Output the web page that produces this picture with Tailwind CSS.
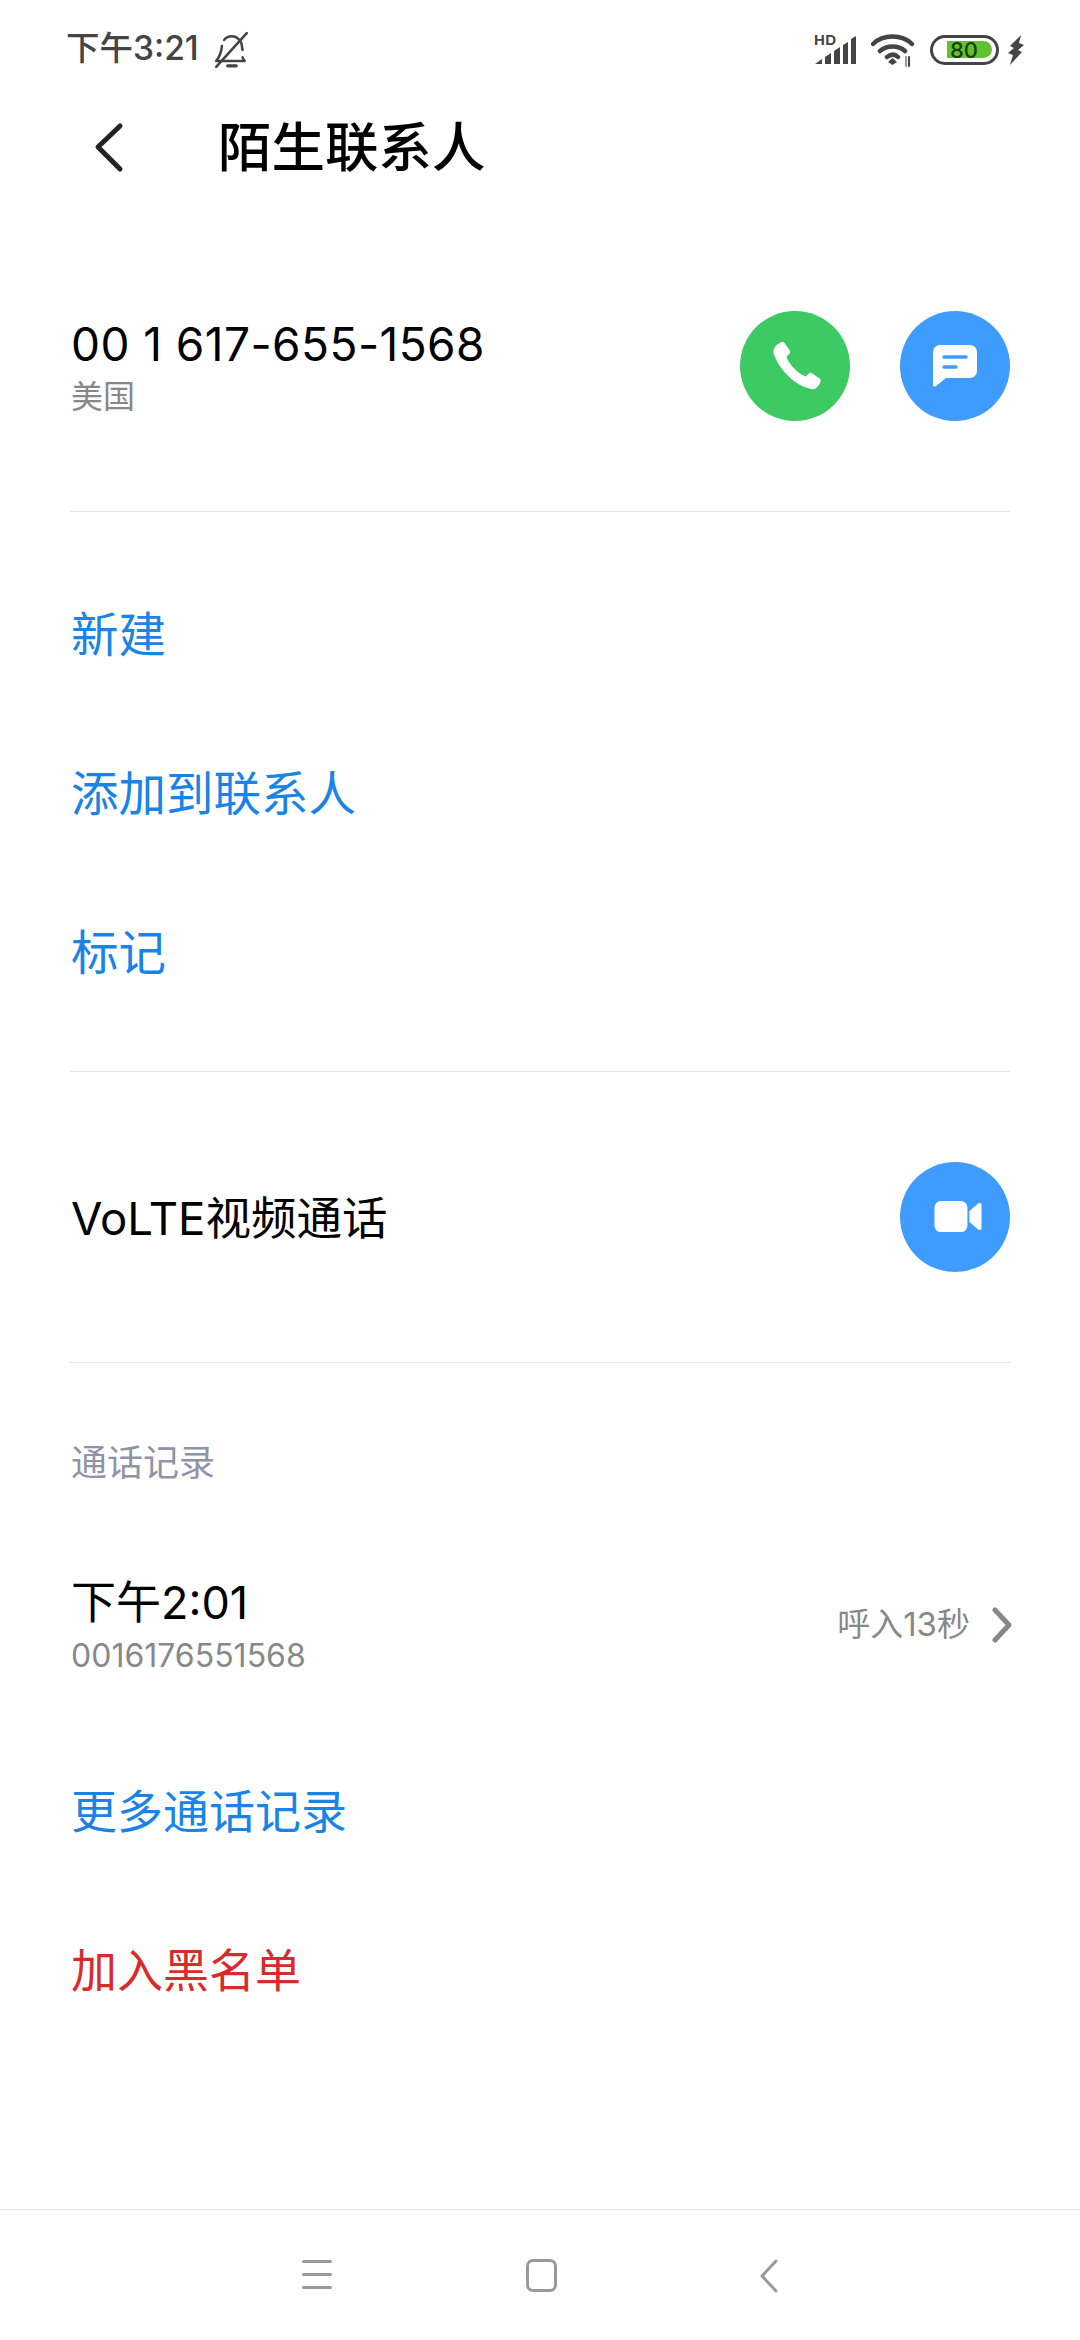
<!doctype html>
<html lang="zh-CN">
<head>
<meta charset="utf-8">
<script src="https://cdn.jsdelivr.net/npm/@tailwindcss/browser@4"></script>
</head>
<body class="m-0 bg-white">
<div class="w-[1080px] h-[2340px] flex flex-col bg-white font-['Inter','Noto_Sans_CJK_SC',sans-serif] overflow-hidden">
  <!-- status bar -->
  <div class="h-[100px] shrink-0 flex items-center pl-[66px] pr-[56px] text-[#444]">
    <span class="text-[33.5px] leading-none font-medium mb-[2px]">下午3:21</span>
    <svg class="ml-[14px]" width="38" height="38" viewBox="0 0 36 36" fill="none" stroke="#444" stroke-width="2.4" stroke-linecap="round" stroke-linejoin="round">
      <path d="M28 18c-.5-2-.5-4-1-6-1-4-5-7-9-7-3 0-5.500 1-7.500 3.500M8.500 14c-.5 5-2 10-5.500 14.500h27c-.8-1-1.500-2-2-3.500"/>
      <path d="M3 34 32 2"/>
      <path d="M14 33h8" stroke-width="3"/>
    </svg>
    <div class="ml-auto flex items-center">
      <div class="relative w-[42px] h-[32px]">
        <span class="absolute left-0 top-0 text-[15px] leading-[12px] font-bold font-['Liberation_Sans',sans-serif] tracking-[0.5px] text-[#444]">HD</span>
        <svg width="42" height="32" viewBox="0 0 42 32" fill="#444">
          <path d="M1 30 8 25v5zM11 23l6-4v11h-6zM20 17l6-4v17h-6zM29 11l5-3v22h-5zM37 5l5-3v28h-5z"/>
        </svg>
      </div>
      <svg class="ml-[15px]" width="46" height="34" viewBox="0 0 46 34" fill="none" stroke="#444" stroke-width="4.500" stroke-linecap="round">
        <path d="M2 11C12 1 31 1 41 11M9 18c7-6 18-6 25 0M16 24c4-3 8-3 11 0"/>
        <path d="M21.500 25 17 29l4.500 3 4.500-3z" fill="#444" stroke="none"/>
        <path d="M35 24v9" stroke="#999" stroke-width="2"/>
        <path d="M38 24v9" stroke-width="2"/>
      </svg>
      <div class="ml-[13px] relative w-[69px] h-[30px] rounded-full border-[3.5px] border-[#444] bg-white">
        <div class="absolute left-[14px] top-[3px] w-[45px] h-[17px] rounded-r-full bg-[#5fc32f]"></div>
        <span class="absolute left-[17px] top-0 h-[23px] flex items-center text-[22px] leading-none font-medium text-[#1d3a10]">80</span>
      </div>
      <svg class="ml-[9px]" width="16" height="30" viewBox="0 0 16 30" fill="#444"><path d="M13 0 2 11l4 2-6 5 5 2-3 10L14 17l-4-2 6-5-5-2z"/></svg>
    </div>
  </div>

  <!-- header -->
  <div class="h-[96px] shrink-0 flex items-center pl-[92px]">
    <svg width="34" height="52" viewBox="0 0 34 52" fill="none" stroke="#222" stroke-width="5" stroke-linecap="round" stroke-linejoin="round"><path d="M28 4 6 25l22 22"/></svg>
    <span class="ml-[92px] text-[53.5px] leading-none font-medium text-black">陌生联系人</span>
  </div>

  <div class="px-[70px] flex flex-col flex-1">
    <!-- contact -->
    <div class="h-[315px] shrink-0 pt-[25px] flex items-center justify-between">
      <div class="flex flex-col pl-px">
        <span class="text-[46px] tracking-[0.45px] leading-[56px] text-black">00 1 617-655-1568</span>
        <span class="mt-[5px] text-[32px] leading-[40px] text-[#888]">美国</span>
      </div>
      <div class="flex items-center gap-[50px]">
        <div class="w-[110px] h-[110px] rounded-full bg-[#3dc963] flex items-center justify-center">
          <svg class="ml-[4px]" width="50" height="50" viewBox="0 0 52 52" fill="#fff"><path d="M9 1.500c1.500-1 3-.8 4 .5l5.500 8c.8 1.200.6 2.500-.5 3.500L15 16c2.500 8 11 17 20 21l3-3c1-1 2.300-1.200 3.500-.4l8 5.500c1.300 1 1.500 2.400.6 4-1.500 3-3.500 6-6.500 7-2 .5-4-.2-6-1C21 44 7 28 2 14c-.6-2-.8-4 0-6 1.300-3 4-5 7-6.500z"/></svg>
        </div>
        <div class="w-[110px] h-[110px] rounded-full bg-[#3f9cff] flex items-center justify-center">
          <svg width="44" height="42" viewBox="0 0 44 42"><path d="M7 0h30a7 7 0 0 1 7 7v19a7 7 0 0 1-7 7H13L3 41c-1.500 1.200-3 .4-3-1V7a7 7 0 0 1 7-7z" fill="#fff"/><path d="M11 12h22M11 22h12" stroke="#3f9cff" stroke-width="3.500" stroke-linecap="round"/></svg>
        </div>
      </div>
    </div>
    <div class="h-px bg-[#e6e6e6] shrink-0"></div>

    <!-- actions -->
    <div class="pt-[43px] pb-[38px] shrink-0 flex flex-col text-[47.5px] text-[#1a84e6] pl-px">
      <div class="h-[159px] flex items-center">新建</div>
      <div class="h-[159px] flex items-center">添加到联系人</div>
      <div class="h-[160px] flex items-center">标记</div>
    </div>
    <div class="h-px bg-[#e6e6e6] shrink-0"></div>

    <!-- video -->
    <div class="h-[290px] shrink-0 flex items-center justify-between">
      <span class="text-[45.5px] text-black pl-px pt-[5px]">VoLTE视频通话</span>
      <div class="w-[110px] h-[110px] rounded-full bg-[#3f9cff] flex items-center justify-center">
        <svg class="ml-[5px]" width="50" height="32" viewBox="0 0 50 34" fill="#fff"><rect x="0" y="0" width="35" height="33" rx="7"/><path d="M37 11 46 3c2-1.500 4-1 4 1v25c0 2-2 2.500-4 1l-9-8z"/></svg>
      </div>
    </div>
    <div class="h-px bg-[#e6e6e6] shrink-0"></div>

    <!-- log -->
    <div class="h-[200px] shrink-0 pl-px text-[36px] text-[#8f93a8] flex items-center">通话记录</div>
    <div class="h-[126px] mt-[-1px] shrink-0 flex items-center justify-between pl-px">
      <div class="flex flex-col">
        <span class="text-[45px] leading-[56px] text-black">下午2:01</span>
        <span class="mt-[5px] text-[32px] leading-[40px] text-[#888]">0016176551568</span>
      </div>
      <div class="flex items-center mr-[-4px]">
        <span class="text-[33px] text-[#888]">呼入13秒</span>
        <svg class="ml-[20px]" width="24" height="36" viewBox="0 0 24 36" fill="none" stroke="#888" stroke-width="5" stroke-linecap="round" stroke-linejoin="round"><path d="M5 3 19 18 5 33"/></svg>
      </div>
    </div>
    <div class="h-[159px] mt-[44px] shrink-0 flex items-center text-[46px] text-[#1a84e6] pl-px">更多通话记录</div>
    <div class="h-[159px] shrink-0 flex items-center text-[46px] text-[#d92b2b] pl-px">加入黑名单</div>
  </div>

  <!-- nav bar -->
  <div class="h-[131px] shrink-0 border-t border-[#e6e6e6] relative flex items-start pt-[49px] pl-[302px] text-[#999]">
    <div class="w-[30px] flex flex-col gap-[10px] mt-[1px]">
      <div class="h-[3px] bg-[#999] rounded-full"></div>
      <div class="h-[3px] bg-[#999] rounded-full"></div>
      <div class="h-[3px] bg-[#999] rounded-full"></div>
    </div>
    <div class="ml-[194px] w-[31px] h-[33px] rounded-[7px] border-[3.5px] border-[#999]"></div>
    <svg class="ml-[203px]" width="18" height="34" viewBox="0 0 18 34" fill="none" stroke="#999" stroke-width="3" stroke-linecap="round" stroke-linejoin="round"><path d="M16 2 2 17l14 15"/></svg>
  </div>
</div>
</body>
</html>
